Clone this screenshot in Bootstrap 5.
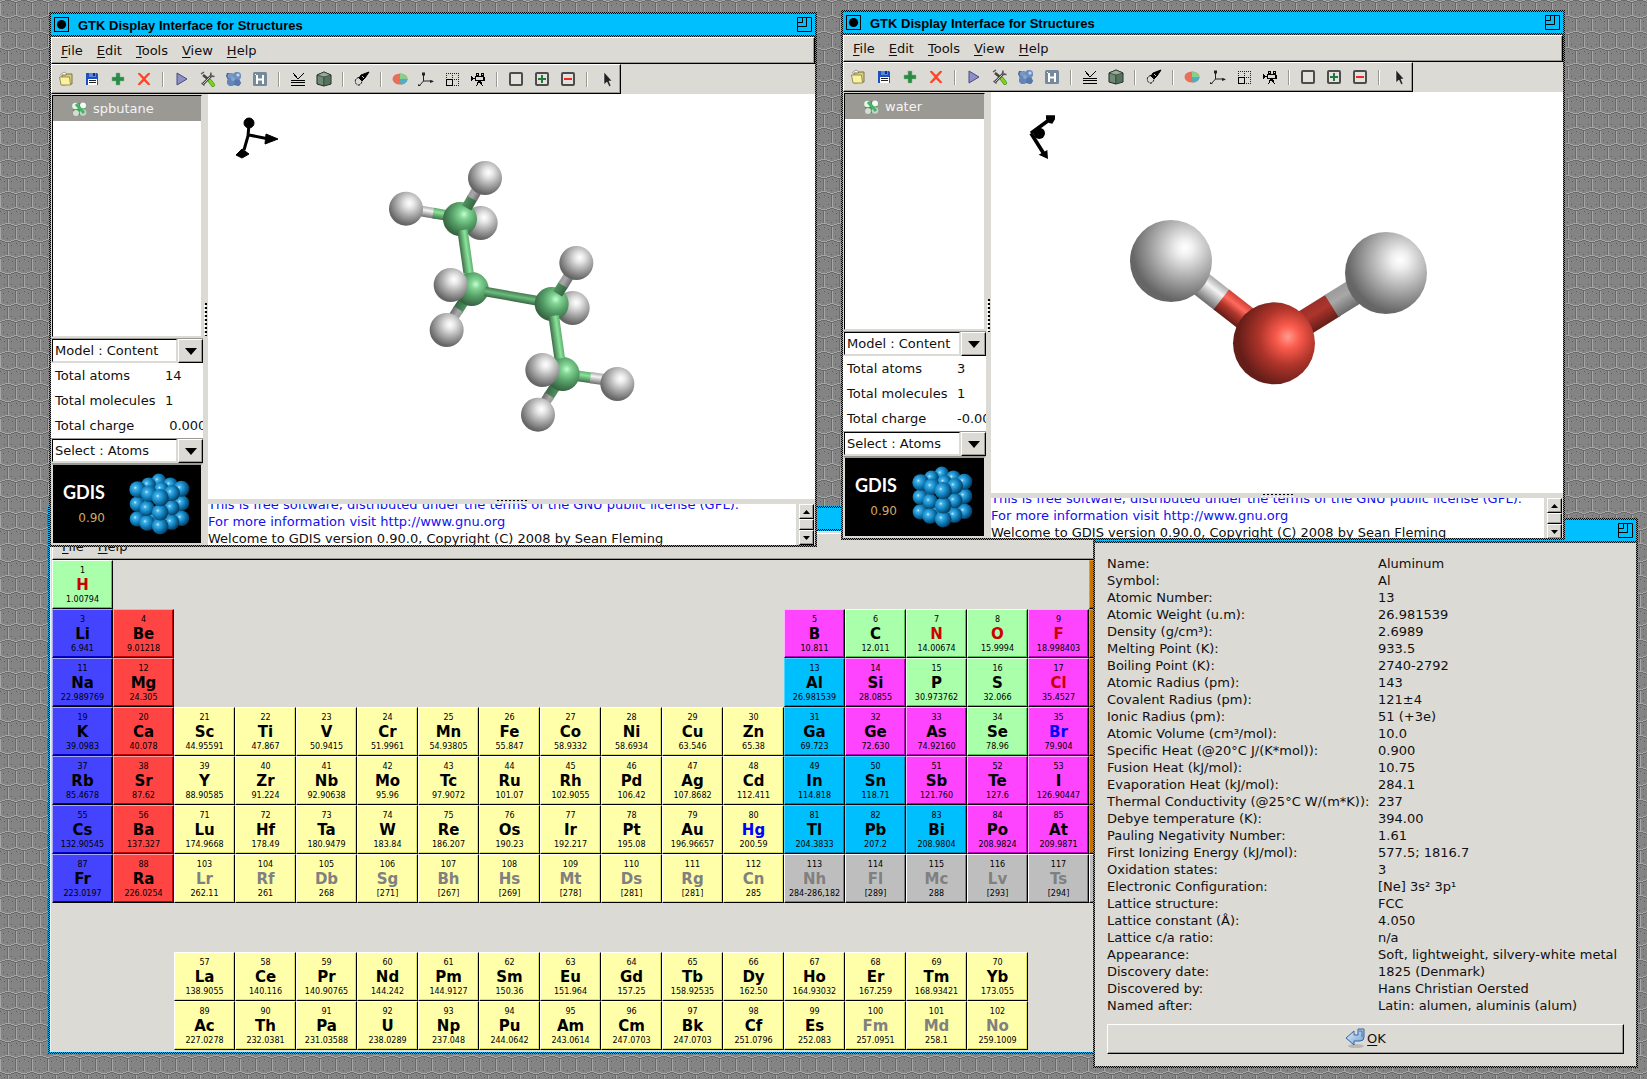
<!DOCTYPE html>
<html lang="en">
<head>
<meta charset="utf-8">
<meta name="viewport" content="width=device-width, initial-scale=1">
<title>GTK Display Interface for Structures</title>
<link rel="stylesheet" href="https://cdn.jsdelivr.net/npm/bootstrap@5.3.0/dist/css/bootstrap.min.css">
<style>
:root{--face:#dcdad5;--shade:#9b9993;--cyan:#00bfff}
body{font-family:"DejaVu Sans",sans-serif;font-size:13px;line-height:17px;color:#101010;background:#828282}
a{color:inherit;text-decoration:none}
.mn{text-decoration:underline;text-underline-offset:2px}
.desktop{min-height:100vh}
.wallpaper{position:absolute;inset:0;width:100%;height:100%}
/* windows */
.win{position:absolute;padding:2px;background:repeating-conic-gradient(#000 0 25%,var(--cyan) 0 50%) 0 0/2px 2px}
.win-body{background:var(--face)}
.win-title{background:var(--cyan);height:21px;margin-bottom:2px;padding:0 3px;color:#000}
.win-title button,.tool,.arrow,.sbtn{border:0;background:none;padding:0}
.win-title svg{display:block}
.win-title h1{font:bold 13px/19px "Liberation Sans",sans-serif;margin:0 0 0 9px;padding-top:2px}
#win-butane{left:49px;top:12px;width:768px;height:535px;z-index:4}
#win-water{left:841px;top:10px;width:724px;height:530px;z-index:4}
#win-table{left:48px;top:506px;width:1106px;z-index:1}
#win-info{left:1093px;top:518px;width:545px;z-index:2}
.bevel{border:1px solid;border-color:#fff #000 #000 #fff;box-shadow:inset -1px -1px var(--shade)}
.menus{height:27px;padding-left:2px}
.menus a{padding:0 7px}
.tools{height:30px;padding:0 1px}
.tool{width:26px;height:26px;display:flex;align-items:center;justify-content:center}
.sep{width:12px;height:15px;display:flex;justify-content:center}
.sep::before{content:"";width:2px;background:linear-gradient(90deg,var(--shade) 50%,#fff 50%)}
/* left column */
.side{flex:none;width:152px;padding-top:1px}
#win-water .side{width:143px}
.tree{margin:0 1px 1px;border:1px solid;border-color:#000 #dcdad5 #dcdad5 #000;background:#fff;outline:0}
.tree-row{height:25px;background:var(--shade);color:#f4f4f4;padding-left:18px;gap:6px}
.combo{height:25px;padding-left:1px;border-top:1px solid var(--shade)}
.combo select{appearance:none;min-width:0;height:23px;border:1px solid;border-color:#000 #dcdad5 #dcdad5 #000;padding:0 2px;background:#fff;color:#101010;border-radius:0;margin-right:1px}
.arrow{width:25px;background:var(--face)!important;border:1px solid;border-color:#fff #000 #000 #fff;box-shadow:inset -1px -1px var(--shade)}
.facts{background:#fff;margin:0;overflow:hidden}
.facts div{height:25px;padding-left:4px;white-space:pre}
.facts dt{width:110px;flex:none;font-weight:400}
.facts dd{margin:0}
.logo{height:82px;background:#000;border:2px solid;border-color:var(--shade) var(--face) var(--face) var(--face);padding:0 11px 0 10px}
.logo-name{font:bold 18px/20px Lato,sans-serif;color:#fff}
.logo-ver{font-size:12px;line-height:16px;color:#d3a860}
.vgrip{flex:none;width:5px;background:var(--face)}
.vgrip::before{content:"";width:3px;height:33px;background:conic-gradient(#000 25%,transparent 0 50%,#fff 0 75%,transparent 0) 0 0/3px 4px}
.hgrip{height:5px;background:var(--face)}
.hgrip::before{content:"";width:33px;height:3px;background:conic-gradient(#000 25%,transparent 0 50%,#fff 0 75%,transparent 0) 0 0/4px 3px}
.scene{background:#fff;min-height:0}
.scene svg{width:100%;height:100%;display:block}
.log{height:41px;background:#fff}
#win-water .log{height:40px}
.log-text{overflow:hidden;white-space:nowrap}
.log-text div{margin-top:-8px}
.log-text p{margin:0}
.link-blue{color:#1010f0}
.sbar{width:19px;padding:0 1px 0 3px;background:var(--face)}
.sbtn{flex:none;height:15px;border:1px solid;border-color:#fff #000 #000 #fff;box-shadow:inset -1px -1px var(--shade);background:var(--face)}
.sthumb{height:11px}
/* periodic table */
.pt-frame{border:solid #f2f1ee;border-width:1px 0 0 1px;padding:1px 2px 2px 1px}
.pt{display:grid;grid-template-columns:repeat(18,minmax(0,1fr));grid-auto-rows:49px}
.el{display:flex;flex-direction:column;align-items:center;justify-content:center;padding:2px 0 0;border:1px solid;border-color:var(--hi) #000 #000 var(--hi);box-shadow:inset -1px -1px var(--lo);background:var(--bg);color:#000;font-size:8px;line-height:10px}
.el b{font-size:15px;line-height:19px;color:var(--ink,#000)}
.k-y{--bg:#ffffaa;--hi:#fff;--lo:#dede55}
.k-g{--bg:#aaffaa;--hi:#f0fff0;--lo:#4cc94c}
.k-b{--bg:#4444ff;--hi:#a9a9f2;--lo:#0000c8}
.k-r{--bg:#ff4444;--hi:#ffa4a4;--lo:#c80000}
.k-m{--bg:#ff44ff;--hi:#ffb4ff;--lo:#c000c0}
.k-c{--bg:#00bfff;--hi:#4fd4ff;--lo:#007ea8}
.k-o{--bg:#c67400;--hi:#f49a1c;--lo:#8a5000}
.k-n{--bg:#bebebe;--hi:#fff;--lo:#7c7c7c}
.i-gas{--ink:#cc0000}.i-liq{--ink:#0000ff}.i-syn{--ink:#808080}
/* element properties */
.props{padding:12px}
.props table{width:100%;margin:0 0 10px}
.props th{font-weight:400;width:271px;padding:0;white-space:nowrap}
.props td{padding:0;white-space:nowrap}
.ok{width:100%;height:30px;background:var(--face);color:#101010;gap:2px;padding:0 0 2px}
</style>
<script src="https://cdn.jsdelivr.net/npm/bootstrap@5.3.0/dist/js/bootstrap.bundle.min.js"></script>
</head>
<body>
<main class="desktop position-relative overflow-hidden">
<svg class="wallpaper" aria-hidden="true" shape-rendering="crispEdges">
  <defs><pattern id="hex" width="16" height="32" patternUnits="userSpaceOnUse">
    <rect width="16" height="32" fill="#848484"/>
    <path d="M0 3h1v12H0zM8 19h1v12H8zM0 1h2v1H0zM14 1h2v1h-2zM2 0h3v1H2zM11 0h3v1h-3zM5 31h3v1H5zM8 31h3v1H8zM0 15h2v1H0zM14 15h2v1h-2zM2 16h3v1H2zM11 16h3v1h-3zM5 17h6v1H5z" fill="#a6a6a6"/>
    <path d="M15 3h1v12h-1zM7 19h1v12H7zM0 2h2v1H0zM14 2h2v1h-2zM2 1h3v1H2zM11 1h3v1h-3zM5 0h6v1H5zM0 16h2v1H0zM14 16h2v1h-2zM2 17h3v1H2zM11 17h3v1h-3zM5 18h6v1H5z" fill="#6a6a6a"/>
    <path d="M3 5h1v1H3zM12 5h1v1h-1zM8 3h1v1H8zM3 12h1v1H3zM12 12h1v1h-1zM7 14h1v1H7zM4 21h1v1H4zM11 21h1v1h-1zM4 28h1v1H4zM11 28h1v1h-1zM0 19h1v1H0zM15 30h1v1h-1z" fill="#5a5a5a"/>
  </pattern></defs>
  <rect width="100%" height="100%" fill="url(#hex)"/>
</svg>

<svg width="0" height="0" class="position-absolute" aria-hidden="true">
 <defs>
  <radialGradient id="gH" cx=".6" cy=".34" r=".7"><stop offset="0" stop-color="#fff"/><stop offset=".2" stop-color="#e6e6e6"/><stop offset=".52" stop-color="#ababab"/><stop offset=".9" stop-color="#666"/></radialGradient>
  <radialGradient id="gHb" cx=".67" cy=".34" r=".76"><stop offset="0" stop-color="#fff"/><stop offset=".13" stop-color="#f0f0f0"/><stop offset=".45" stop-color="#b2b2b2"/><stop offset=".85" stop-color="#666"/></radialGradient>
  <radialGradient id="gC" cx=".62" cy=".36" r=".7"><stop offset="0" stop-color="#c4ffd0"/><stop offset=".2" stop-color="#82d494"/><stop offset=".52" stop-color="#56a068"/><stop offset=".9" stop-color="#386643"/></radialGradient>
  <radialGradient id="gO" cx=".67" cy=".42" r=".72"><stop offset="0" stop-color="#ff9b8d"/><stop offset=".2" stop-color="#f95a4b"/><stop offset=".48" stop-color="#b0352b"/><stop offset=".85" stop-color="#641d18"/></radialGradient>
  <radialGradient id="gS" cx=".36" cy=".4" r=".65"><stop offset="0" stop-color="#d4f2ff"/><stop offset=".16" stop-color="#45b2e6"/><stop offset=".5" stop-color="#1387c6"/><stop offset="1" stop-color="#053a5c"/></radialGradient>
  <linearGradient id="bC" x2="0" y2="1"><stop stop-color="#5fae70"/><stop offset=".35" stop-color="#8ae49b"/><stop offset="1" stop-color="#3c6d47"/></linearGradient>
  <linearGradient id="bE" x2="0" y2="1"><stop stop-color="#447a50"/><stop offset=".45" stop-color="#6cbd7d"/><stop offset="1" stop-color="#386643"/></linearGradient>
  <linearGradient id="bD" x2="0" y2="1"><stop stop-color="#4f935f"/><stop offset="1" stop-color="#386643"/></linearGradient>
  <linearGradient id="bH" x2="0" y2="1"><stop stop-color="#aaa"/><stop offset=".35" stop-color="#f4f4f4"/><stop offset="1" stop-color="#6b6b6b"/></linearGradient>
  <linearGradient id="bG" x2="0" y2="1"><stop stop-color="#9a9a9a"/><stop offset=".4" stop-color="#a8a8a8"/><stop offset="1" stop-color="#6b6b6b"/></linearGradient>
  <linearGradient id="bO" x2="0" y2="1"><stop stop-color="#d04034"/><stop offset=".3" stop-color="#ff6a5c"/><stop offset=".6" stop-color="#b0352b"/><stop offset="1" stop-color="#641d18"/></linearGradient>
  <linearGradient id="bP" x2="0" y2="1"><stop stop-color="#99302a"/><stop offset=".4" stop-color="#ad352c"/><stop offset="1" stop-color="#641d18"/></linearGradient>
  <linearGradient id="gR" x2="1" y2="1"><stop stop-color="#e4f0fb"/><stop offset="1" stop-color="#6f9fd4"/></linearGradient>
 </defs>
 <symbol id="t-dot" viewBox="0 0 15 15"><rect x=".5" y=".5" width="14" height="14" fill="none" stroke="#000"/><circle cx="7.5" cy="7.5" r="4.6"/></symbol>
 <symbol id="t-max" viewBox="0 0 15 15"><path d="M.5.5h14v14H.5zM.5 5.500h5v-5M.5 9.500h9v-9" fill="none" stroke="#000"/></symbol>
 <symbol id="i-open" viewBox="0 0 16 16"><path d="M2 4l4-3 3 2 1 3" fill="#fff" stroke="#777" stroke-width=".7"/><path d="M4 14V4h4l1-1h5v10z" fill="#d9cf7a" stroke="#7d7440"/><path d="M1.500 6h10l1 8H3z" fill="#f8f2a4" stroke="#9a9150"/></symbol>
 <symbol id="i-save" viewBox="0 0 16 16"><path d="M2 2h11l1 1v11H2z" fill="#1c50c0"/><path d="M5 2h7v4H5z" fill="#5b86d8"/><path d="M9 2h2v3H9z" fill="#0f2f80"/><path d="M4 8h9v6H4z" fill="#fff"/><path d="M5 9.500h7M5 11.500h7" stroke="#222"/></symbol>
 <symbol id="i-add" viewBox="0 0 16 16"><path d="M6 2h4v4h4v4h-4v4H6v-4H2V6h4z" fill="#2c8a45" stroke="#79b888" stroke-width=".5"/></symbol>
 <symbol id="i-del" viewBox="0 0 16 16"><path d="M2 2h2l4 4 4-4h2v1L9.500 8l4.500 5v1h-2L8 10l-4 4H2v-1l4.500-5L2 3z" fill="#ff4326"/></symbol>
 <symbol id="i-play" viewBox="0 0 16 16"><path d="M3 2l10 6-10 6z" fill="#8d90c8" stroke="#4a4c78"/></symbol>
 <symbol id="i-fix" viewBox="0 0 16 16"><path d="M3 13L12 4M3 4l5 4" stroke="#444" stroke-width="2.600"/><path d="M3 13L12 4" stroke="#ccc"/><path d="M11 1.500L10.500 5l4 .5M1 3l3-2M1.500 12l3 2.500" stroke="#555" fill="none" stroke-width="1.500"/><path d="M10 10l3 4" stroke="#4d9a10" stroke-width="4" stroke-linecap="round"/><path d="M10 10l3 4" stroke="#7fd624" stroke-width="2.500" stroke-linecap="round"/></symbol>
 <symbol id="i-balls" viewBox="0 0 16 16"><path d="M1 2h4l3 1 2-2 4 1 1 4-2 3 2 3-2 3-5-1-4 1-3-3 1-3-2-4z" fill="#3f5f90"/><circle cx="4.500" cy="5" r="3" fill="#7797c4"/><circle cx="11" cy="5" r="4" fill="#6d8fbf"/><circle cx="5" cy="11" r="4" fill="#6385b8"/><circle cx="11.500" cy="11.500" r="3" fill="#5678ac"/><circle cx="7" cy="8" r="2" fill="#88a6d0"/><circle cx="12" cy="4" r="1.600" fill="#c3d6ef"/></symbol>
 <symbol id="i-h" viewBox="0 0 16 16"><rect x="1" y="1" width="14" height="14" rx="1.500" fill="#75899a"/><path d="M5 4v9M11 4v9M5 8.500h6" stroke="#fff" stroke-width="2"/><path d="M3 3l2 2" stroke="#fff"/></symbol>
 <symbol id="i-min" viewBox="0 0 16 16" shape-rendering="crispEdges"><path d="M1 9.500h14M1 11.500h14M1 14.500h14" stroke="#000"/><path d="M3 2l5 6 6-6" stroke="#000" fill="none"/></symbol>
 <symbol id="i-box" viewBox="0 0 16 16"><path d="M1 4l7-3 7 3v9l-7 2-7-2z" fill="#6d8a74" stroke="#222"/><path d="M1 4l7 2 7-2-7-3z" fill="#93ad98" stroke="#222" stroke-width=".6"/><path d="M8 6v9" stroke="#222"/><path d="M8 6l6-2v9l-6 2z" fill="#4c6653" opacity=".7"/></symbol>
 <symbol id="i-pen" viewBox="0 0 16 16"><path d="M15 1L7 4l-2 3 3 3 3-3z" fill="#000" stroke="#000"/><path d="M8 5l2 2" stroke="#ccc"/><path d="M5 6.500C1.500 7 .5 10 2 12.500S7 15 8 10" fill="none" stroke="#000" stroke-dasharray="2.500 1"/></symbol>
 <symbol id="i-pie" viewBox="0 0 16 16"><ellipse cx="8" cy="8" rx="7.500" ry="5.500" fill="#e86e58"/><path d="M8 8V2.500C12 2.500 15.500 5 15.500 8z" fill="#84d08c"/><path d="M8 8h7.500c0 3-3 5.500-7 5.500z" fill="#4bb0c6"/></symbol>
 <symbol id="i-axes" viewBox="0 0 16 16"><path d="M5.500 2v8h9M5.500 10L1 15" fill="none" stroke="#222"/><path d="M4 1.500h3v3H4zM12 9l4 1.500-4 1.500zM0 13l3 2H0z" fill="#222"/></symbol>
 <symbol id="i-cell" viewBox="0 0 16 16" shape-rendering="crispEdges"><path d="M2 2.500h13M14.500 2v13M8 14.500h7M2.500 2v6M8.500 2v6M8 8.500h7" stroke="#222" stroke-dasharray="1 1"/><rect x="2.500" y="8.500" width="6" height="6" fill="none" stroke="#000"/></symbol>
 <symbol id="i-cam" viewBox="0 0 16 16" shape-rendering="crispEdges"><path d="M1 5l3 2 1-1v3L4 8l-3 2zM6 2h3v3h2V2h3v4h1v4h-4l1 2 1 3h-1l-3-4-2 4H6l2-5H5V5h1z" fill="#000"/><path d="M6 6h7v3H6zM7 3h1v1H7zM12 3h1v1h-1z" fill="#dcdad5"/></symbol>
 <symbol id="i-sq" viewBox="0 0 16 16"><rect x="2" y="2" width="12" height="12" rx="1" fill="#e4e2de" stroke="#4c4c4c" stroke-width="2"/></symbol>
 <symbol id="i-sqp" viewBox="0 0 16 16"><rect x="2" y="2" width="12" height="12" rx="1" fill="#e4e2de" stroke="#4c4c4c" stroke-width="2"/><path d="M8 4v8M4 8h8" stroke="#1f7a3a" stroke-width="2"/></symbol>
 <symbol id="i-sqm" viewBox="0 0 16 16"><rect x="2" y="2" width="12" height="12" rx="1" fill="#e4e2de" stroke="#4c4c4c" stroke-width="2"/><path d="M4 8h8" stroke="#f0281c" stroke-width="2"/></symbol>
 <symbol id="i-cur" viewBox="0 0 16 16"><path d="M6 1l8 9h-3l2 5-2 .5L9 11l-3 2.500z" fill="#222" stroke="#f4f4f4" stroke-width=".5"/></symbol>
 <symbol id="i-mol" viewBox="0 0 16 16"><path d="M2 2h5l7 0v5l0 7H8L2 13z" fill="#3a9a55"/><circle cx="4.500" cy="5" r="3.300" fill="#e6f5e8"/><circle cx="12" cy="4.500" r="3" fill="#f4faf4"/><circle cx="5" cy="12" r="3" fill="#d4dcd4"/><circle cx="12" cy="11.500" r="3.300" fill="#c8d2c8"/><path d="M5 3l8 9" stroke="#45b466" stroke-width="3"/></symbol>
 <symbol id="i-down" viewBox="0 0 12 8"><path d="M0 1h12L6 8z"/></symbol>
 <symbol id="cube" viewBox="268 460 184 186">
  <g fill="url(#gS)"><circle cx="310" cy="560" r="26"/><circle cx="410" cy="560" r="26"/><circle cx="340" cy="600" r="26"/><circle cx="390" cy="600" r="26"/>
  <circle cx="427" cy="596" r="23"/><circle cx="397" cy="608" r="23"/><circle cx="293" cy="598" r="23"/><circle cx="323" cy="610" r="24"/><circle cx="362" cy="620" r="25"/>
  <circle cx="427" cy="550" r="23"/><circle cx="397" cy="564" r="23"/><circle cx="293" cy="553" r="23"/><circle cx="323" cy="566" r="23"/><circle cx="362" cy="578" r="25"/>
  <circle cx="358" cy="483" r="22"/><circle cx="327" cy="495" r="22"/><circle cx="393" cy="495" r="22"/><circle cx="426" cy="507" r="24"/><circle cx="366" cy="508" r="22"/><circle cx="294" cy="509" r="25"/><circle cx="398" cy="520" r="24"/><circle cx="328" cy="522" r="25"/><circle cx="362" cy="534" r="26"/></g>
 </symbol>
</svg>

<section class="win d-flex flex-column" id="win-butane" aria-label="spbutane">
  <header class="win-title d-flex align-items-center"><button type="button" aria-label="Window menu"><svg width="15" height="15"><use href="#t-dot"/></svg></button><h1>GTK Display Interface for Structures</h1><button class="ms-auto" type="button" aria-label="Resize"><svg width="15" height="15"><use href="#t-max"/></svg></button></header>
  <div class="win-body d-flex flex-column flex-grow-1">
    <nav class="menus bevel d-flex align-items-center"></nav>
    <div class="tools bevel d-flex align-items-center align-self-start" role="toolbar" aria-label="Tools"></div>
    <div class="d-flex flex-grow-1">
      <aside class="side d-flex flex-column">
        <div class="tree flex-grow-1"><div class="tree-row d-flex align-items-center"><svg width="16" height="16"><use href="#i-mol"/></svg><span>spbutane</span></div></div>
        <div class="combo d-flex"><select class="flex-grow-1" aria-label="Panel"><option>Model : Content</option></select><button class="arrow" type="button" aria-label="Open panel list"><svg width="12" height="8" class="d-block mx-auto"><use href="#i-down"/></svg></button></div>
        <dl class="facts"><div class="d-flex align-items-center"><dt>Total atoms</dt><dd>14</dd></div><div class="d-flex align-items-center"><dt>Total molecules</dt><dd>1</dd></div><div class="d-flex align-items-center"><dt>Total charge</dt><dd> 0.000</dd></div></dl>
        <div class="combo d-flex"><select class="flex-grow-1" aria-label="Selection mode"><option>Select : Atoms</option></select><button class="arrow" type="button" aria-label="Open mode list"><svg width="12" height="8" class="d-block mx-auto"><use href="#i-down"/></svg></button></div>
        <div class="logo d-flex align-items-center justify-content-between"><div class="d-flex flex-column align-items-end gap-2"><span class="logo-name">GDIS</span><span class="logo-ver">0.90</span></div><svg width="61" height="62" aria-hidden="true"><use href="#cube"/></svg></div>
      </aside>
      <div class="vgrip d-flex align-items-center justify-content-center"></div>
      <div class="d-flex flex-column flex-grow-1 overflow-hidden">
        <div class="scene flex-grow-1"><svg viewBox="0 0 607 405" role="img" aria-label="Butane molecule">
          <g stroke="#000" fill="#000"><path d="M41 30l-1 12-4 14M41 41l20 4" stroke-width="3" fill="none"/><circle cx="41" cy="29" r="5"/><path d="M58 40l12 5-13 5zM34 55l7 5-7 4-6-3z" stroke-width="1"/></g>
          <g transform="translate(162 46) scale(.33333)">
            <circle cx="332" cy="249" r="51" fill="url(#gH)"/><circle cx="608" cy="504" r="51" fill="url(#gH)"/>
            <g transform="translate(108 207) rotate(10)"><rect x="40" y="-18" width="50" height="32" fill="url(#bH)"/><rect x="82" y="-18" width="60" height="32" fill="url(#bC)"/></g>
            <circle cx="270" cy="237" r="51" fill="url(#gC)"/>
            <g transform="translate(292 200) rotate(-60)"><rect x="-4" y="-16" width="36" height="32" fill="url(#bD)"/><rect x="28" y="-16" width="34" height="32" fill="url(#bG)"/></g>
            <g transform="translate(582 702) rotate(8)"><rect x="30" y="-16" width="55" height="32" fill="url(#bC)"/><rect x="80" y="-17" width="60" height="34" fill="url(#bH)"/></g>
            <g transform="translate(305 447) rotate(123)"><rect x="40" y="-16" width="40" height="32" fill="url(#bD)"/><rect x="72" y="-16" width="40" height="32" fill="url(#bG)"/></g>
            <circle cx="305" cy="447" r="51" fill="url(#gC)"/>
            <g transform="translate(277 270) rotate(82)"><rect width="130" y="-16" height="31" fill="url(#bC)"/></g>
            <g transform="translate(345 454) rotate(10)"><rect width="175" y="-14" height="29" fill="url(#bE)"/></g>
            <circle cx="545" cy="492" r="51" fill="url(#gC)"/>
            <g transform="translate(565 458) rotate(-58)"><rect x="-4" y="-16" width="36" height="32" fill="url(#bD)"/><rect x="26" y="-16" width="34" height="32" fill="url(#bG)"/></g>
            <g transform="translate(580 702) rotate(123)"><rect x="40" y="-16" width="44" height="32" fill="url(#bD)"/><rect x="76" y="-16" width="40" height="32" fill="url(#bG)"/></g>
            <circle cx="578" cy="702" r="51" fill="url(#gC)"/>
            <g transform="translate(551 527) rotate(82)"><rect width="130" y="-16" height="32" fill="url(#bC)"/></g>
            <g fill="url(#gH)"><circle cx="345" cy="114" r="51"/><circle cx="108" cy="206" r="51"/><circle cx="242" cy="435" r="51"/><circle cx="230" cy="570" r="51"/><circle cx="619" cy="369" r="51"/><circle cx="517" cy="690" r="51"/><circle cx="504" cy="824" r="51"/><circle cx="742" cy="732" r="51"/></g>
          </g></svg></div>
        <div class="hgrip d-flex align-items-center justify-content-center"></div>
        <div class="log d-flex"></div>
      </div>
    </div>
  </div>
</section>

<section class="win d-flex flex-column" id="win-water" aria-label="water">
  <header class="win-title d-flex align-items-center"><button type="button" aria-label="Window menu"><svg width="15" height="15"><use href="#t-dot"/></svg></button><h1>GTK Display Interface for Structures</h1><button class="ms-auto" type="button" aria-label="Resize"><svg width="15" height="15"><use href="#t-max"/></svg></button></header>
  <div class="win-body d-flex flex-column flex-grow-1">
    <nav class="menus bevel d-flex align-items-center"></nav>
    <div class="tools bevel d-flex align-items-center align-self-start" role="toolbar" aria-label="Tools"></div>
    <div class="d-flex flex-grow-1">
      <aside class="side d-flex flex-column">
        <div class="tree flex-grow-1"><div class="tree-row d-flex align-items-center"><svg width="16" height="16"><use href="#i-mol"/></svg><span>water</span></div></div>
        <div class="combo d-flex"><select class="flex-grow-1" aria-label="Panel"><option>Model : Content</option></select><button class="arrow" type="button" aria-label="Open panel list"><svg width="12" height="8" class="d-block mx-auto"><use href="#i-down"/></svg></button></div>
        <dl class="facts"><div class="d-flex align-items-center"><dt>Total atoms</dt><dd>3</dd></div><div class="d-flex align-items-center"><dt>Total molecules</dt><dd>1</dd></div><div class="d-flex align-items-center"><dt>Total charge</dt><dd>-0.000</dd></div></dl>
        <div class="combo d-flex"><select class="flex-grow-1" aria-label="Selection mode"><option>Select : Atoms</option></select><button class="arrow" type="button" aria-label="Open mode list"><svg width="12" height="8" class="d-block mx-auto"><use href="#i-down"/></svg></button></div>
        <div class="logo d-flex align-items-center justify-content-between"><div class="d-flex flex-column align-items-end gap-2"><span class="logo-name">GDIS</span><span class="logo-ver">0.90</span></div><svg width="61" height="62" aria-hidden="true"><use href="#cube"/></svg></div>
      </aside>
      <div class="vgrip d-flex align-items-center justify-content-center"></div>
      <div class="d-flex flex-column flex-grow-1 overflow-hidden">
        <div class="scene flex-grow-1"><svg viewBox="0 0 572 401" role="img" aria-label="Water molecule">
          <g transform="translate(9 -2) scale(.33333)">
            <path d="M93 130L150 88M93 130L132 192" stroke="#000" stroke-width="11"/><circle cx="118" cy="130" r="17"/><path d="M138 76h27v12l-8 13-10-2-9-12zM116 194l26-14 2 27z"/>
            <g transform="translate(513 513) rotate(38)"><rect x="100" y="-40" width="96" height="76" fill="url(#bH)"/><rect x="190" y="-40" width="110" height="76" fill="url(#bO)"/></g>
            <g transform="translate(822 760) rotate(-32)"><rect x="90" y="-42" width="124" height="78" fill="url(#bP)"/><rect x="206" y="-42" width="94" height="78" fill="url(#bG)"/></g>
            <circle cx="513" cy="513" r="123" fill="url(#gHb)"/><circle cx="1158" cy="549" r="123" fill="url(#gHb)"/><circle cx="822" cy="760" r="123" fill="url(#gO)"/>
          </g></svg></div>
        <div class="hgrip d-flex align-items-center justify-content-center"></div>
        <div class="log d-flex"></div>
      </div>
    </div>
  </div>
</section>

<section class="win" id="win-table" aria-label="Periodic table">
  <header class="win-title"></header>
  <div class="win-body pt-frame">
    <nav class="menus bevel d-flex align-items-center"><a href="#"><span class="mn">F</span>ile</a><a href="#"><span class="mn">H</span>elp</a></nav>
    <div class="pt" id="pt"></div>
  </div>
</section>

<section class="win" id="win-info" aria-label="Element properties">
  <header class="win-title d-flex align-items-center"><button class="ms-auto" type="button" aria-label="Resize"><svg width="15" height="15"><use href="#t-max"/></svg></button></header>
  <div class="win-body props">
    <table><tbody>
      <tr><th scope="row">Name:</th><td>Aluminum</td></tr>
      <tr><th scope="row">Symbol:</th><td>Al</td></tr>
      <tr><th scope="row">Atomic Number:</th><td>13</td></tr>
      <tr><th scope="row">Atomic Weight (u.m):</th><td>26.981539</td></tr>
      <tr><th scope="row">Density (g/cm³):</th><td>2.6989</td></tr>
      <tr><th scope="row">Melting Point (K):</th><td>933.5</td></tr>
      <tr><th scope="row">Boiling Point (K):</th><td>2740-2792</td></tr>
      <tr><th scope="row">Atomic Radius (pm):</th><td>143</td></tr>
      <tr><th scope="row">Covalent Radius (pm):</th><td>121±4</td></tr>
      <tr><th scope="row">Ionic Radius (pm):</th><td>51 (+3e)</td></tr>
      <tr><th scope="row">Atomic Volume (cm³/mol):</th><td>10.0</td></tr>
      <tr><th scope="row">Specific Heat (@20°C J/(K*mol)):</th><td>0.900</td></tr>
      <tr><th scope="row">Fusion Heat (kJ/mol):</th><td>10.75</td></tr>
      <tr><th scope="row">Evaporation Heat (kJ/mol):</th><td>284.1</td></tr>
      <tr><th scope="row">Thermal Conductivity (@25°C W/(m*K)):</th><td>237</td></tr>
      <tr><th scope="row">Debye temperature (K):</th><td>394.00</td></tr>
      <tr><th scope="row">Pauling Negativity Number:</th><td>1.61</td></tr>
      <tr><th scope="row">First Ionizing Energy (kJ/mol):</th><td>577.5; 1816.7</td></tr>
      <tr><th scope="row">Oxidation states:</th><td>3</td></tr>
      <tr><th scope="row">Electronic Configuration:</th><td>[Ne] 3s² 3p¹</td></tr>
      <tr><th scope="row">Lattice structure:</th><td>FCC</td></tr>
      <tr><th scope="row">Lattice constant (Å):</th><td>4.050</td></tr>
      <tr><th scope="row">Lattice c/a ratio:</th><td>n/a</td></tr>
      <tr><th scope="row">Appearance:</th><td>Soft, lightweight, silvery-white metal</td></tr>
      <tr><th scope="row">Discovery date:</th><td>1825 (Denmark)</td></tr>
      <tr><th scope="row">Discovered by:</th><td>Hans Christian Oersted</td></tr>
      <tr><th scope="row">Named after:</th><td>Latin: alumen, aluminis (alum)</td></tr>
    </tbody></table>
    <button class="ok bevel d-flex align-items-center justify-content-center" type="button"><svg width="20" height="20" viewBox="0 0 20 20" aria-hidden="true"><ellipse cx="11" cy="18" rx="8" ry="2" fill="#b9b8b4"/><path d="M1 10l8-7v4h4V1h6v8q0 4-4 4H9v4z" fill="url(#gR)" stroke="#3465a4"/><path d="M14 3h3v6" fill="none" stroke="#204a87" stroke-width=".7"/></svg><span><span class="mn">O</span>K</span></button>
  </div>
</section>
</main>

<script>
// Menu bar, toolbar and message log are the same in every model window
const menus = ['File', 'Edit', 'Tools', 'View', 'Help'];
const tools = ['open:Open', 'save:Save', 'add:New model', 'del:Close model', '', 'play:Animation', 'fix:Edit', 'balls:Display', 'h:Hydrogens', '',
  'min:Minimize', 'box:Periodic cell', '', 'pen:Measure', '', 'pie:Colours', 'axes:Axes', 'cell:Images', 'cam:Camera', '',
  'sq:Single', 'sqp:Add view', 'sqm:Remove view', '', 'cur:Select'];
document.querySelectorAll('#win-butane, #win-water').forEach(w => {
  w.querySelector('.menus').innerHTML = menus.map(m => `<a href="#"><span class="mn">${m[0]}</span>${m.slice(1)}</a>`).join('');
  w.querySelector('.tools').innerHTML = tools.map(t => {
    if (!t) return '<span class="sep"></span>';
    const [icon, name] = t.split(':');
    return `<button class="tool" type="button" aria-label="${name}"><svg width="16" height="16"><use href="#i-${icon}"/></svg></button>`;
  }).join('');
  w.querySelector('.log').innerHTML = `<div class="log-text flex-grow-1"><div><p class="link-blue">This is free software, distributed under the terms of the GNU public license (GPL).</p><p class="link-blue">For more information visit http://www.gnu.org</p><p>Welcome to GDIS version 0.90.0, Copyright (C) 2008 by Sean Fleming</p></div></div>
  <div class="sbar d-flex flex-column"><button class="sbtn" type="button" aria-label="Scroll up"><svg class="d-block mx-auto" width="7" height="4"><path d="M0 4h7L3.500 0z"/></svg></button><div class="sbtn sthumb"></div><button class="sbtn" type="button" aria-label="Scroll down"><svg class="d-block mx-auto" width="7" height="4"><path d="M0 0h7L3.500 4z"/></svg></button></div>`;
});

// 'row,column': colour group, number, symbol, weight, ink for each element in turn
const rows = {
  '1,1': 'g 1 H 1.00794 gas',
  '2,1': 'b 3 Li 6.941|r 4 Be 9.01218',
  '2,13': 'm 5 B 10.811|g 6 C 12.011|g 7 N 14.00674 gas|g 8 O 15.9994 gas|m 9 F 18.998403 gas',
  '3,1': 'b 11 Na 22.989769|r 12 Mg 24.305',
  '3,13': 'c 13 Al 26.981539|m 14 Si 28.0855|g 15 P 30.973762|g 16 S 32.066|m 17 Cl 35.4527 gas',
  '4,1': 'b 19 K 39.0983|r 20 Ca 40.078|y 21 Sc 44.95591|y 22 Ti 47.867|y 23 V 50.9415|y 24 Cr 51.9961|y 25 Mn 54.93805|y 26 Fe 55.847|y 27 Co 58.9332|y 28 Ni 58.6934|y 29 Cu 63.546|y 30 Zn 65.38|c 31 Ga 69.723|m 32 Ge 72.630|m 33 As 74.92160|g 34 Se 78.96|m 35 Br 79.904 liq',
  '5,1': 'b 37 Rb 85.4678|r 38 Sr 87.62|y 39 Y 88.90585|y 40 Zr 91.224|y 41 Nb 92.90638|y 42 Mo 95.96|y 43 Tc 97.9072|y 44 Ru 101.07|y 45 Rh 102.9055|y 46 Pd 106.42|y 47 Ag 107.8682|y 48 Cd 112.411|c 49 In 114.818|c 50 Sn 118.71|m 51 Sb 121.760|m 52 Te 127.6|m 53 I 126.90447',
  '6,1': 'b 55 Cs 132.90545|r 56 Ba 137.327|y 71 Lu 174.9668|y 72 Hf 178.49|y 73 Ta 180.9479|y 74 W 183.84|y 75 Re 186.207|y 76 Os 190.23|y 77 Ir 192.217|y 78 Pt 195.08|y 79 Au 196.96657|y 80 Hg 200.59 liq|c 81 Tl 204.3833|c 82 Pb 207.2|c 83 Bi 208.9804|m 84 Po 208.9824|m 85 At 209.9871',
  '7,1': 'b 87 Fr 223.0197|r 88 Ra 226.0254|y 103 Lr 262.11 syn|y 104 Rf 261 syn|y 105 Db 268 syn|y 106 Sg [271] syn|y 107 Bh [267] syn|y 108 Hs [269] syn|y 109 Mt [278] syn|y 110 Ds [281] syn|y 111 Rg [281] syn|y 112 Cn 285 syn|n 113 Nh 284-286,182 syn|n 114 Fl [289] syn|n 115 Mc 288 syn|n 116 Lv [293] syn|n 117 Ts [294] syn',
  '9,3': 'y 57 La 138.9055|y 58 Ce 140.116|y 59 Pr 140.90765|y 60 Nd 144.242|y 61 Pm 144.9127|y 62 Sm 150.36|y 63 Eu 151.964|y 64 Gd 157.25|y 65 Tb 158.92535|y 66 Dy 162.50|y 67 Ho 164.93032|y 68 Er 167.259|y 69 Tm 168.93421|y 70 Yb 173.055',
  '10,3': 'y 89 Ac 227.0278|y 90 Th 232.0381|y 91 Pa 231.03588|y 92 U 238.0289|y 93 Np 237.048|y 94 Pu 244.0642|y 95 Am 243.0614|y 96 Cm 247.0703|y 97 Bk 247.0703|y 98 Cf 251.0796|y 99 Es 252.083|y 100 Fm 257.0951 syn|y 101 Md 258.1 syn|y 102 No 259.1009 syn'
};
// The last column lies under the properties window, so its buttons carry a label only
const covered = ['He', 'Ne', 'Ar', 'Kr', 'Xe', 'Rn', 'Og'].map((s, i) =>
  `<button type="button" class="el ${s === 'Og' ? 'k-n' : 'k-o'}" style="grid-area:${i + 1}/18" aria-label="${s}"></button>`).join('');
document.getElementById('pt').innerHTML = Object.entries(rows).map(([at, list]) => {
  const [row, col] = at.split(',').map(Number);
  return list.split('|').map((e, i) => {
    const [k, n, s, w, ink] = e.split(' ');
    return `<button type="button" class="el k-${k} ${ink ? 'i-' + ink : ''}" style="grid-area:${row}/${col + i}"><span>${n}</span><b>${s}</b><span>${w}</span></button>`;
  }).join('');
}).join('') + covered;
</script>
</body>
</html>
